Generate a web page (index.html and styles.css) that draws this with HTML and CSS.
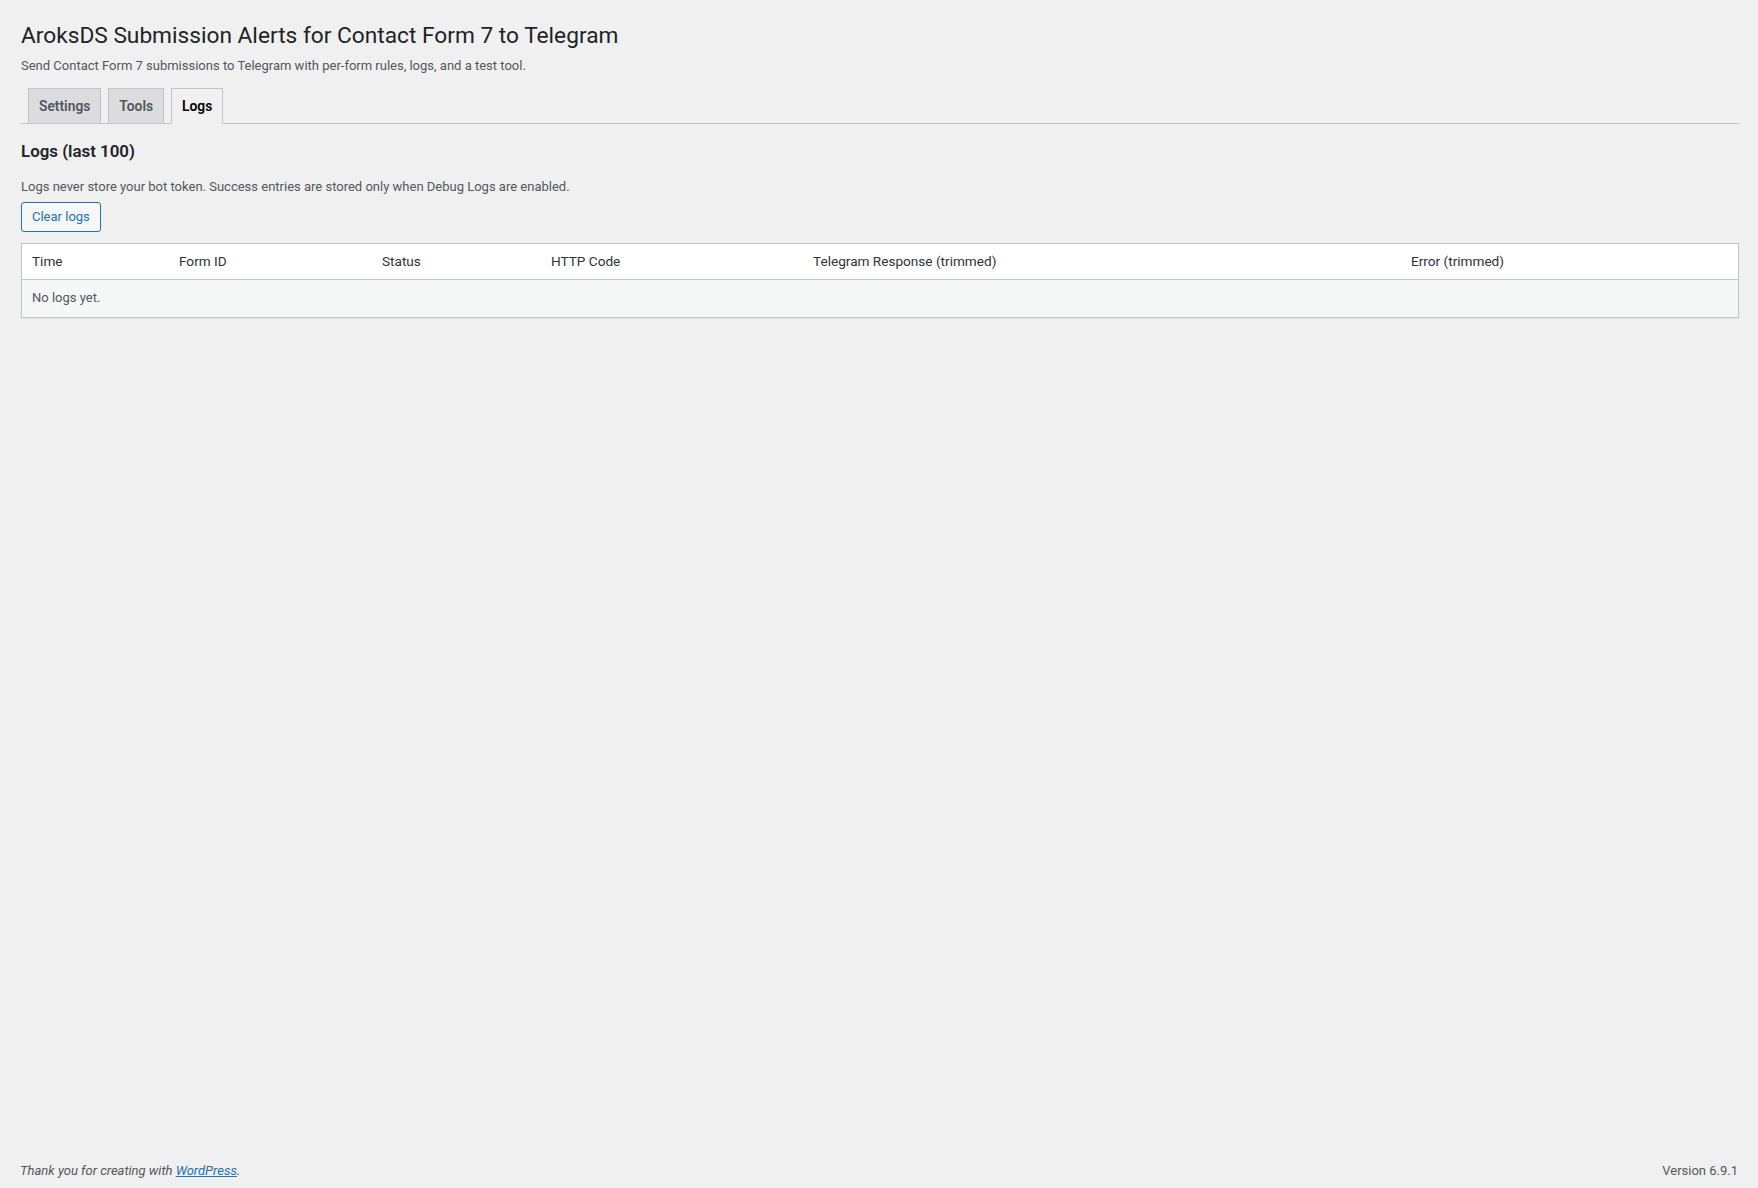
FILE: index.html
```html
<!DOCTYPE html>
<html lang="en">
<head>
<meta charset="utf-8">
<title>AroksDS Submission Alerts for Contact Form 7 to Telegram</title>
<link rel="stylesheet" href="styles.css">
</head>
<body>
<div class="wpwrap">
  <div class="wpcontent">
    <div class="wrap">
      <h1 class="page-title">AroksDS Submission Alerts for Contact Form 7 to Telegram</h1>
      <p class="description">Send Contact Form 7 submissions to Telegram with per-form rules, logs, and a test tool.</p>
      <nav class="nav-tab-wrapper">
        <a class="nav-tab" href="#">Settings</a>
        <a class="nav-tab" href="#">Tools</a>
        <a class="nav-tab nav-tab-active" href="#">Logs</a>
      </nav>
      <h2 class="section-title">Logs (last 100)</h2>
      <p class="note">Logs never store your bot token. Success entries are stored only when Debug Logs are enabled.</p>
      <form class="clear-form">
        <button type="button" class="button">Clear logs</button>
      </form>
      <table class="widefat striped">
        <thead>
          <tr>
            <th class="col-time">Time</th>
            <th class="col-form">Form ID</th>
            <th class="col-status">Status</th>
            <th class="col-code">HTTP Code</th>
            <th class="col-response">Telegram Response (trimmed)</th>
            <th class="col-error">Error (trimmed)</th>
          </tr>
        </thead>
        <tbody>
          <tr>
            <td colspan="6">No logs yet.</td>
          </tr>
        </tbody>
      </table>
    </div>
  </div>
  <footer class="wpfooter">
    <p class="footer-left"><span class="thanks">Thank you for creating with <a href="#">WordPress</a>.</span></p>
    <p class="footer-right">Version 6.9.1</p>
  </footer>
</div>
</body>
</html>
```

FILE: styles.css
```css
html, body {
  margin: 0;
  padding: 0;
  height: 100%;
}
body {
  background: #f0f0f1;
  color: #3c434a;
  font-family: Roboto, "Noto Sans", "Liberation Sans", sans-serif;
  font-size: 13px;
  line-height: 1.4em;
}
.wpwrap {
  position: relative;
  min-height: 100%;
  display: flex;
  flex-direction: column;
}
.wpcontent {
  flex: 1;
  padding-left: 20px;
}
.wrap {
  margin: 12px 19px 0 1px;
}
.page-title {
  font-size: 22.7px;
  font-weight: 400;
  margin: 0;
  padding: 9px 0 4px;
  line-height: 1.3;
  color: #1d2327;
}
.description {
  margin: 1px 0 4px;
  font-size: 13px;
  line-height: 1.5;
  color: #50575e;
}
.nav-tab-wrapper {
  display: flex;
  border-bottom: 1px solid #c3c4c7;
  padding-top: 9px;
  margin: 0;
}
.nav-tab {
  border: 1px solid #c3c4c7;
  border-bottom: none;
  margin-left: 7px;
  padding: 5px 10px;
  font-size: 13.8px;
  line-height: 24px;
  font-weight: 600;
  background: #dcdcde;
  color: #50575e;
  text-decoration: none;
  white-space: nowrap;
}
.nav-tab-active {
  border-bottom: 1px solid #f0f0f1;
  background: #f0f0f1;
  color: #000;
  margin-bottom: -1px;
}
.section-title {
  font-size: 1.3em;
  font-weight: 600;
  margin: 18px 0 17px;
  color: #1d2327;
}
.note {
  margin: 14px 0 5px;
  font-size: 13px;
  line-height: 1.5;
  color: #50575e;
}
.clear-form {
  margin: 0 0 11px;
}
.button {
  display: inline-block;
  font-family: inherit;
  font-size: 13px;
  line-height: 2.15384615;
  min-height: 30px;
  margin: 0;
  padding: 0 10px;
  border: 1px solid #2271b1;
  border-radius: 3px;
  background: #f6f7f7;
  color: #2271b1;
  cursor: pointer;
  box-sizing: border-box;
  vertical-align: top;
}
.widefat {
  width: 100%;
  table-layout: fixed;
  border-spacing: 0;
  border: 1px solid #c3c4c7;
  background: #fff;
  box-shadow: 0 1px 1px rgba(0,0,0,.04);
}
.widefat th {
  text-align: left;
  font-weight: 400;
  font-size: 13.6px;
  line-height: 19.6px;
  padding: 8px 10px;
  color: #2c3338;
  border-bottom: 1px solid #c3c4c7;
}
.widefat td {
  font-size: 13px;
  line-height: 19.5px;
  padding: 8px 10px 9px;
  color: #50575e;
}
.striped > tbody > tr:nth-child(odd) {
  background: #f6f7f7;
}
.col-time { width: 127px; }
.col-form { width: 183px; }
.col-status { width: 149px; }
.col-code { width: 242px; }
.col-response { width: 578px; }
.wpfooter {
  display: flex;
  justify-content: space-between;
  padding: 13px 20px 7px;
  color: #50575e;
}
.wpfooter p {
  margin: 0;
  font-size: 13px;
  line-height: 1.55;
}
.thanks {
  font-style: italic;
}
.thanks a {
  color: #2271b1;
}
```
